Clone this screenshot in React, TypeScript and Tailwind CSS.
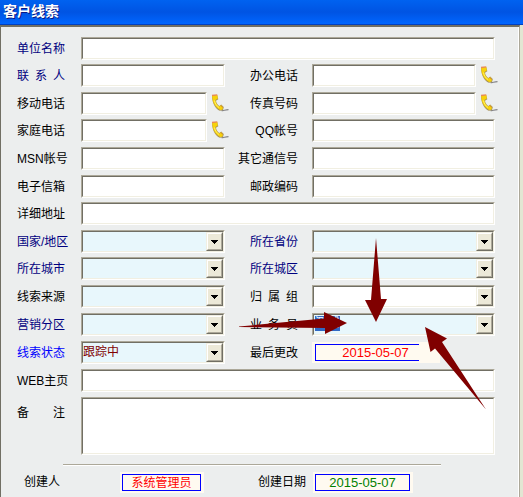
import React from 'react';

const sunken = 'h-[23px] border border-t-[#aca899] border-l-[#aca899] border-r-white border-b-white';
const inner = 'block w-full h-full border border-t-[#716f64] border-l-[#716f64] border-r-[#f1efe2] border-b-[#f1efe2] outline-none';

interface LabelProps {
  id: string;
  text: string;
  color?: string;
  right?: boolean;
}

const Label: React.FC<LabelProps> = ({ id, text, color = 'text-black', right }) => (
  <label htmlFor={id} className={`h-[25px] leading-[25px] whitespace-pre ${color} ${right ? 'text-right pr-3.5' : 'pl-px'}`}>
    {text}
  </label>
);

const TextField: React.FC<{ id: string }> = ({ id }) => (
  <div className={`flex-1 min-w-0 ${sunken}`}>
    <input id={id} type="text" className={`${inner} bg-white px-0.5`} />
  </div>
);

const PhoneIcon: React.FC = () => (
  <svg className="w-[18px] h-[18px] mt-0.5 shrink-0" viewBox="0 0 18 18" fill="none">
    <path d="M10.5 16.5C13 17.3 13.5 15.6 17.5 15.6" stroke="#85858a" strokeWidth="1.1" />
    <path d="M1 2L6.3 1.2L7.3 5.2L5 6.8C5.2 9 7 11.3 8.5 12L10.2 10.6L12.8 13L12 16.3L8.8 16.8C4.5 15 1.2 9.5 1 2Z" fill="#a8935a" />
    <path d="M1 1.6L6.3 1L6.8 4.6L4.4 6C4.6 9 6.6 11.8 8.6 12.6L10.3 11.2L12 13.4L11.4 15.6L9.2 16C5.2 14 2.2 9.5 1.6 5.6Z" fill="#f7d20a" />
    <path d="M3.5 6.5C3.8 9.3 5.7 12 8 13.5" stroke="#fff06a" strokeWidth="1" />
    <path d="M1 1.5L6.3 0.9" stroke="#e98a55" strokeWidth="1.4" />
    <path d="M9.6 11.6L11.8 13.6" stroke="#d99530" strokeWidth="1" />
  </svg>
);

interface SelectFieldProps {
  id: string;
  value?: string;
  bg?: string;
  selected?: boolean;
}

const SelectField: React.FC<SelectFieldProps> = ({ id, value = '', bg = 'bg-[#e8f7fc]', selected }) => (
  <div className={`relative flex-1 min-w-0 ${sunken}`}>
    <select id={id} defaultValue={value} className={`${inner} ${bg} appearance-none pr-5 text-[#800000] leading-[19px]`}>
      <option value={value}>{selected ? '' : value}</option>
    </select>
    {selected && (
      <span className="absolute left-0.5 top-0.5 w-[25px] h-[15px] overflow-hidden bg-[#316ac5] text-white leading-[15px] pointer-events-none">{value}</span>
    )}
    <span className="absolute right-px top-px w-[17px] h-[19px] bg-[#ece9d8] border border-t-[#f1efe2] border-l-[#f1efe2] border-r-[#716f64] border-b-[#716f64] pointer-events-none">
      <span className="flex w-full h-full items-center justify-center border border-t-white border-l-white border-r-[#aca899] border-b-[#aca899]">
        <svg className="w-[7px] h-1" viewBox="0 0 7 4" shapeRendering="crispEdges">
          <path d="M0 0H7V1H6V2H5V3H4V4H3V3H2V2H1V1H0Z" fill="#000" />
        </svg>
      </span>
    </span>
  </div>
);

interface StampProps {
  id: string;
  value: string;
  className: string;
}

const Stamp: React.FC<StampProps> = ({ id, value, className }) => (
  <output id={id} className={`block h-[17px] border border-[#0000ff] text-center leading-[16px] ${className}`}>{value}</output>
);

// Annotation arrows drawn over the form
const Arrows: React.FC = () => (
  <svg className="absolute left-0 top-0 w-[523px] h-[497px] pointer-events-none" viewBox="0 0 523 497" fill="#800000">
    <path d="M239 326.5L324 318.5V312L347 323L325 334V328L239 327Z" />
    <path d="M376 238L381 299H387L376 322L365 300H371Z" />
    <path d="M486 409.5L435 348.5L430.5 352L425 327L447 338.5L442 342Z" />
  </svg>
);

export default function App() {
  return (
    <div className="relative min-h-screen flex flex-col bg-[#e2e6d3] font-['Liberation_Sans','Noto_Sans_CJK_SC',sans-serif] text-[12px]">
      <header className="h-[25px] bg-linear-to-b from-[#0062f0] via-[#0054e3] to-[#0066ff] border-b border-[#0040c0]">
        <h1 className="pl-[3px] text-[14px] leading-[23px] font-bold text-white [text-shadow:1px_1px_#0a1883]">客户线索</h1>
      </header>

      <form className="flex-1 mr-[3px] bg-[#eceeee] border-t-2 border-l border-r border-t-[#716f64] border-l-[#716f64] border-r-[#aca899] shadow-[inset_-1px_0_#fff]">
        <div className="grid grid-cols-[65px_144fr_87px_183fr] grid-rows-[27px_28px_27px_28px_28px_27px_28px_27px_28px_28px_28px_28px_28px_58px] pt-2.5 pl-[15px] pr-6">
          <Label id="company" text="单位名称" color="text-[#000080]" />
          <div className="col-span-3 flex"><TextField id="company" /></div>

          <Label id="contact" text={'联\u2002系\u2002人'} color="text-[#000080]" />
          <div className="flex"><TextField id="contact" /></div>
          <Label id="office" text="办公电话" right />
          <div className="flex gap-1 -mr-[3px]"><TextField id="office" /><PhoneIcon /></div>

          <Label id="mobile" text="移动电话" />
          <div className="flex gap-1 -mr-1"><TextField id="mobile" /><PhoneIcon /></div>
          <Label id="fax" text="传真号码" right />
          <div className="flex gap-1 -mr-[3px]"><TextField id="fax" /><PhoneIcon /></div>

          <Label id="home" text="家庭电话" />
          <div className="flex gap-1 -mr-1"><TextField id="home" /><PhoneIcon /></div>
          <Label id="qq" text="QQ帐号" right />
          <div className="flex"><TextField id="qq" /></div>

          <Label id="msn" text="MSN帐号" />
          <div className="flex"><TextField id="msn" /></div>
          <Label id="other" text="其它通信号" right />
          <div className="flex"><TextField id="other" /></div>

          <Label id="email" text="电子信箱" />
          <div className="flex"><TextField id="email" /></div>
          <Label id="zip" text="邮政编码" right />
          <div className="flex"><TextField id="zip" /></div>

          <Label id="address" text="详细地址" />
          <div className="col-span-3 flex"><TextField id="address" /></div>

          <Label id="country" text="国家/地区" color="text-[#000080]" />
          <div className="flex"><SelectField id="country" /></div>
          <Label id="province" text="所在省份" color="text-[#000080]" right />
          <div className="flex"><SelectField id="province" /></div>

          <Label id="city" text="所在城市" color="text-[#000080]" />
          <div className="flex"><SelectField id="city" /></div>
          <Label id="district" text="所在城区" color="text-[#000080]" right />
          <div className="flex"><SelectField id="district" /></div>

          <Label id="source" text="线索来源" />
          <div className="flex"><SelectField id="source" /></div>
          <Label id="group" text={'归\u2002属\u2002组'} right />
          <div className="flex"><SelectField id="group" bg="bg-white" /></div>

          <Label id="region" text="营销分区" color="text-[#000080]" />
          <div className="flex"><SelectField id="region" /></div>
          <Label id="sales" text={'业\u2002务\u2002员'} right />
          <div className="flex"><SelectField id="sales" value="测试" selected /></div>

          <Label id="status" text="线索状态" color="text-[#0000ff]" />
          <div className="flex"><SelectField id="status" value="跟踪中" /></div>
          <Label id="modified" text="最后更改" right />
          <div className="mt-px w-32 h-[21px] py-0.5 pl-[3px] pr-[21px] bg-[#fffaf0]">
            <Stamp id="modified" value="2015-05-07" className="border-r-0 pl-4 text-[13px] text-[#ff0000]" />
          </div>

          <Label id="web" text="WEB主页" />
          <div className="col-span-3 flex"><TextField id="web" /></div>

          <div className="grid pt-1 content-start">
            <Label id="remark" text="备　　注" />
          </div>
          <div className="col-span-3 border border-t-[#aca899] border-l-[#aca899] border-r-white border-b-white">
            <textarea id="remark" className={`${inner} bg-white resize-none`} />
          </div>
        </div>

        <hr className="mt-[9px] ml-[62px] mr-[78px] h-0.5 border-t border-b border-t-[#aca899] border-b-white" />

        <div className="grid grid-cols-[96px_97fr_96px_206fr] pt-1.5 pl-[23px]">
          <label htmlFor="creator" className="leading-[21px]">创建人</label>
          <div className="w-[84px] h-[21px] py-0.5 pl-0.5 pr-[3px] bg-[#fffaf0]">
            <Stamp id="creator" value="系统管理员" className="text-[#ff0000]" />
          </div>
          <label htmlFor="created" className="leading-[21px] text-right pr-[7px]">创建日期</label>
          <div className="w-[100px] h-[21px] py-0.5 pl-0.5 pr-[3px] bg-[#fffaf0]">
            <Stamp id="created" value="2015-05-07" className="text-[13px] text-[#008000]" />
          </div>
        </div>
      </form>

      <Arrows />
    </div>
  );
}
